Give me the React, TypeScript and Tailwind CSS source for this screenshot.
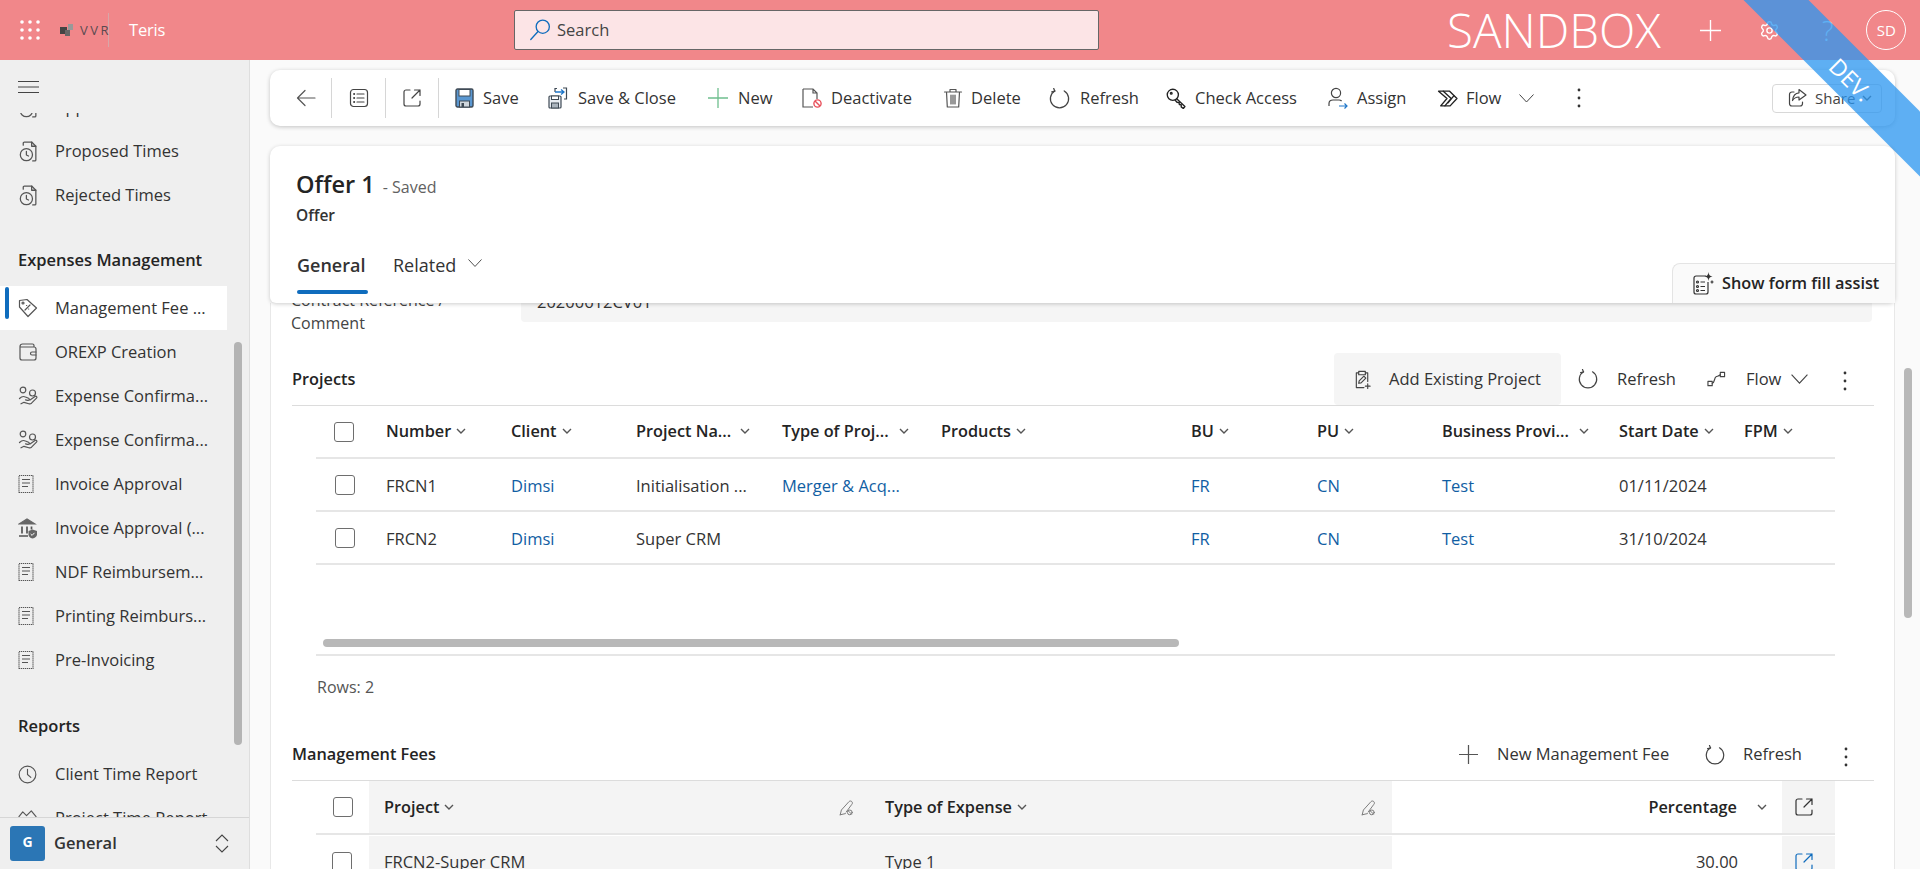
import React from "react";
import { Settings } from "lucide-react";

type P = { c?: string };
const Svg = ({ s = 20, c = "#424242", w = 1.2, children }: { s?: number; c?: string; w?: number; children: React.ReactNode }) => (
  <svg width={s} height={s} viewBox="0 0 20 20" fill="none" stroke={c} strokeWidth={w} strokeLinecap="round" strokeLinejoin="round" className="shrink-0">
    {children}
  </svg>
);

const Waffle = () => (
  <svg width="20" height="20" viewBox="0 0 20 20" fill="#fff" className="shrink-0">
    {[2, 10, 18].map((y) => [2, 10, 18].map((x) => <circle key={`${x}${y}`} cx={x} cy={y} r="1.8" />))}
  </svg>
);
const SearchI = () => (
  <Svg c="#0f6cbd" s={22}><circle cx="12.5" cy="7" r="6" /><path d="M8.2 11.4 1.6 18.6" /></Svg>
);
const Burger = () => (
  <svg width="21" height="12" viewBox="0 0 21 12" stroke="#444" strokeWidth="1" className="shrink-0"><path d="M0 .5h21M0 6h21M0 11.5h21" /></svg>
);
const Back = () => <Svg c="#555"><path d="M19 10H1.5M9 2.5 1.5 10 9 17.5" /></Svg>;
const ListI = () => (
  <Svg c="#444"><rect x="1.5" y="1.5" width="17" height="17" rx="3" /><path d="M8 6h7M8 10h7M8 14h7" /><path d="M5 6h.3M5 10h.3M5 14h.3" strokeWidth="1.8" /></Svg>
);
const OpenI = ({ c = "#444" }: P) => (
  <Svg c={c}><path d="M8 2H4a2 2 0 0 0-2 2v12a2 2 0 0 0 2 2h12a2 2 0 0 0 2-2v-3" /><path d="M10 10 18 2M12.5 2H18v5.5" /></Svg>
);
const SaveI = () => (
  <svg width="19" height="20" viewBox="0 0 19 20" className="shrink-0">
    <rect x="1" y="1" width="17" height="18" rx="1.5" fill="#5a97d1" stroke="#3f4a55" strokeWidth="1.4" />
    <rect x="4" y="1.5" width="11" height="6.5" fill="#fff" stroke="#3f4a55" />
    <rect x="4.5" y="13" width="10" height="6" fill="#cfd6dc" stroke="#3f4a55" />
    <rect x="6.5" y="15" width="2.5" height="4" fill="#3f4a55" />
  </svg>
);
const SaveCloseI = () => (
  <svg width="20" height="22" viewBox="0 0 20 22" fill="none" className="shrink-0">
    <rect x="1" y="9" width="12" height="12" rx="1" fill="#e8edf2" stroke="#3f4a55" strokeWidth="1.2" />
    <rect x="3.5" y="9" width="7" height="3.5" fill="#fff" stroke="#3f4a55" strokeWidth="1" />
    <rect x="3.5" y="16" width="7" height="5" fill="#aab4bd" stroke="#3f4a55" strokeWidth="1" />
    <path d="M7 5V1.5h2M15 1h3.5v11H16" stroke="#3f4a55" strokeWidth="1.2" />
    <path d="M7 5h9M13 2.5 16 5l-3 2.5" stroke="#1f77c9" strokeWidth="1.3" />
  </svg>
);
const Plus = ({ c = "#6fbf8e", s = 20 }: { c?: string; s?: number }) => (
  <Svg c={c} s={s} w={1.3}><path d="M10 0v20M0 10h20" strokeLinecap="butt" /></Svg>
);
const DeactivateI = () => (
  <svg width="20" height="20" viewBox="0 0 20 20" fill="none" className="shrink-0">
    <path d="M1 1h10l4 4v6M1 1v18h10M11 1v4h4" stroke="#555" strokeWidth="1.2" />
    <circle cx="15.5" cy="15.5" r="3.6" stroke="#e8505b" strokeWidth="1.4" />
    <path d="m13 13 5 5" stroke="#e8505b" strokeWidth="1.4" />
  </svg>
);
const Trash = () => (
  <Svg c="#555"><path d="M1.5 4h17M7 4V1.5h6V4M3.5 4l.8 15h11.4l.8-15M8 7v9M10 7v9M12 7v9" /></Svg>
);
const Refresh = ({ c = "#444", s = 20 }: { c?: string; s?: number }) => (
  <Svg c={c} s={s}><path d="M5.5 2.8a8.7 8.7 0 1 0 9 0" /><path d="M4.5 .4 5.6 3 2.6 3.6" /></Svg>
);
const KeyI = () => (
  <Svg c="#222" s={21} w={1.3}><circle cx="6.5" cy="6.5" r="5.3" /><circle cx="5" cy="5" r=".8" /><path d="m10.2 10.2 7.8 7.5-1.5 1.8-2-1.500v-2l-1.800-.300-.300-1.700-1.900-.400-1.700-1.900" /></Svg>
);
const AssignI = () => (
  <svg width="20" height="22" viewBox="0 0 20 22" fill="none" className="shrink-0">
    <circle cx="8" cy="6" r="4.6" stroke="#444" strokeWidth="1.2" />
    <path d="M1 19v-2.5C1 14 3 13 5 13h6c1.2 0 2 .4 2.600 1" stroke="#444" strokeWidth="1.2" />
    <path d="M11 19h8M16.500 16.500 19 19l-2.500 2.500" stroke="#1f77c9" strokeWidth="1.2" />
  </svg>
);
const FlowI = () => (
  <Svg c="#222" s={21} w={1.3}><path d="M1.500 3H12l7 7-6.500 7H3.500l6-7-8-7Z" /><path d="M6 3l7.500 7-6 7M16 7.500 10.500 14" /></Svg>
);
const Chev = ({ w = 15, c = "#444" }: { w?: number; c?: string }) => (
  <svg width={w} height={w * 0.6} viewBox="0 0 15 9" fill="none" stroke={c} strokeWidth="1" className="shrink-0"><path d="m.5.5 7 7.500 7-7.500" /></svg>
);
const SmallChev = () => (
  <svg width="10" height="7" viewBox="0 0 10 7" fill="none" stroke="#555" strokeWidth="1.4" className="shrink-0"><path d="m1 1 4 4 4-4" /></svg>
);
const Dots = () => (
  <svg width="4" height="20" viewBox="0 0 4 20" fill="#333" className="shrink-0"><circle cx="2" cy="2" r="1.400" /><circle cx="2" cy="10" r="1.400" /><circle cx="2" cy="18" r="1.400" /></svg>
);
const ShareI = () => (
  <Svg c="#444"><path d="M6 4H4a2.500 2.500 0 0 0-2.500 2.500v9A2.500 2.500 0 0 0 4 18h8a2.500 2.500 0 0 0 2.500-2.500V14" /><path d="M11 1.500 18 7l-7 5V9C8 9 6 10 4.500 12.500 5 8 7.500 5 11 4.800V1.500Z" /></Svg>
);
const DocClock = () => (
  <Svg c="#555" s={21}><path d="M5 4V2a1 1 0 0 1 1-1h7l4 4v13a1 1 0 0 1-1 1h-2" /><path d="M13 1v4h4" /><circle cx="8" cy="13" r="5.800" /><path d="M8 10v3.300l2 1" /></Svg>
);
const TagI = () => (
  <Svg c="#555" s={20}><path d="M9 1.500 18.500 10 10 18.500 1.500 9V2.500l7.500-1Z" /><circle cx="5" cy="5" r="1" /><path d="m7 12 5-5M8.500 7.500h.2M10.500 11h.2" /></Svg>
);
const WalletI = () => (
  <Svg c="#555" s={20}><path d="M2 4.500A2.500 2.500 0 0 1 4.500 2h10A1.500 1.500 0 0 1 16 3.500V5H2M2 4.500V16a2 2 0 0 0 2 2h12a2 2 0 0 0 2-2V7a2 2 0 0 0-2-2" /><path d="M18 10h-4a1.500 1.500 0 0 0 0 3h4" /></Svg>
);
const HandI = () => (
  <Svg c="#555" s={20}><circle cx="5" cy="4" r="2.800" /><circle cx="14.500" cy="7" r="3" /><path d="M1.500 12.500c2-2 4-2.500 6-1.500l3 1.300c1.500.7.700 2.400-1 2l-2-.5M12 14l5-3.500c1.200-.8 2.500.5 1.500 1.700l-5 5c-.8.700-1.700.8-2.700.5L6 16.300l-3 1.500" /></Svg>
);
const ReceiptI = () => (
  <svg width="16" height="20" viewBox="0 0 16 20" fill="none" stroke="#555" className="shrink-0">
    <path d="M1 1.500h14v17H1Z" strokeWidth="1.200" strokeDasharray="1.300 .7" />
    <path d="M4 5.500h8M4 9h8M4 12.500h6" strokeWidth="1.200" />
  </svg>
);
const BankI = () => (
  <svg width="20" height="21" viewBox="0 0 20 21" fill="none" className="shrink-0">
    <path d="M1 6 9 1l8 5H1Z" fill="#666" stroke="#666" strokeWidth="1.100" />
    <path d="M4 8.500v7M9 8.500v7M13.500 8.500v3M1 18h9" stroke="#555" strokeWidth="1.700" />
    <path d="M14.500 11.500 19 13v3.500c0 2-2 3.500-4.500 4-2.500-.5-4-2-4-4V13l4-1.500Z" fill="#666" />
    <path d="m12.700 16 1.400 1.400 2.400-2.600" stroke="#fff" strokeWidth="1" />
  </svg>
);
const ClockI = () => (
  <Svg c="#555" s={19}><circle cx="10" cy="10" r="8.800" /><path d="M10 4.500V10l3.500 3" /></Svg>
);
const ChartI = () => (
  <Svg c="#555" s={19}><path d="m1 8 4-5 4 4 5-5 5 6" /><path d="M1 18h18" /></Svg>
);
const NodesI = () => (
  <Svg c="#444" s={19}><rect x="1" y="12" width="4.500" height="4.500" /><rect x="14" y="2.500" width="4.500" height="4.500" /><path d="M5.500 14c3-1 2-6 4-7 1.500-.8 2.500 0 4.500-2" /></Svg>
);
const ClipI = () => (
  <Svg c="#444" s={19}><path d="M6 3H3.500v15.500h8M13 3h2.500v9" /><path d="M6 1.500h7V5H6Z" /><path d="m6 14 .5-2.500 5-5 2 2-5 5L6 14Z" /><path d="M15.500 14.500v5M13 17h5" /></Svg>
);
const Pencil = () => (
  <Svg c="#777" s={16}><path d="M1.500 18.500 3 12.500 12.500 2c1-1 2.500-1 3.500 0s1 2.500 0 3.500l-7 9.500" /><path d="M1.500 18.500 8 17" /><circle cx="13.500" cy="15.500" r="3" /><path d="m11.500 13.500 4 4" /></Svg>
);
const FormFill = () => (
  <svg width="21" height="23" viewBox="0 0 21 23" fill="none" stroke="#333" strokeWidth="1.200" className="shrink-0">
    <path d="M13 4H3a2 2 0 0 0-2 2v14a2 2 0 0 0 2 2h10a2 2 0 0 0 2-2V10" />
    <path d="M7.500 10H12M7.500 14.500H12M7.500 18.500H12" />
    <circle cx="4.500" cy="10" r="1" /><circle cx="4.500" cy="14.500" r="1" /><circle cx="4.500" cy="18.500" r="1" />
    <path d="M15.500 0c.4 3 1.200 4 4 4.500-2.800.5-3.600 1.500-4 4.500-.4-3-1.200-4-4-4.500 2.800-.5 3.600-1.500 4-4.500Z" fill="#333" stroke="none" />
    <path d="M19 8.500v3M17.500 10h3" />
  </svg>
);
const UpDown = () => (
  <svg width="14" height="19" viewBox="0 0 14 19" fill="none" stroke="#444" strokeWidth="1.100" className="shrink-0"><path d="m1 7 6-6 6 6M1 12l6 6 6-6" /></svg>
);

const font = "font-['Open_Sans','Noto_Sans',sans-serif]";

function NavItem({ icon, label, active }: { icon: React.ReactNode; label: string; active?: boolean }) {
  return (
    <div className={`relative flex h-[44px] w-[227px] shrink-0 items-center text-[16.500px] text-[#333] ${active ? "bg-white" : ""}`}>
      {active && <span className="absolute left-[5px] top-[1px] h-[32px] w-[4px] rounded-sm bg-[#0f6cbd]" />}
      <span className="ml-[18px] flex w-[37px] shrink-0 items-center">{icon}</span>
      <span className="whitespace-nowrap">{label}</span>
    </div>
  );
}

function NavHead({ label, h }: { label: string; h: string }) {
  return (
    <div className={`flex shrink-0 items-end pl-[18px] pb-[13px] text-[16.500px] font-semibold text-[#242424] ${h}`}>{label}</div>
  );
}

function Sidebar() {
  return (
    <aside className="flex w-[250px] shrink-0 flex-col border-r border-[#dedede] bg-[#efefef]">
      <div className="flex h-[53px] shrink-0 items-start pl-[18px] pt-[21px]"><Burger /></div>
      <div className="relative flex-1 overflow-hidden">
        <div className="-mt-[28px] flex flex-col">
          <NavItem icon={<DocClock />} label="Approved Times" />
          <NavItem icon={<DocClock />} label="Proposed Times" />
          <NavItem icon={<DocClock />} label="Rejected Times" />
          <NavHead label="Expenses Management" h="h-[69px]" />
          <NavItem active icon={<TagI />} label="Management Fee ..." />
          <NavItem icon={<WalletI />} label="OREXP Creation" />
          <NavItem icon={<HandI />} label="Expense Confirma..." />
          <NavItem icon={<HandI />} label="Expense Confirma..." />
          <NavItem icon={<ReceiptI />} label="Invoice Approval" />
          <NavItem icon={<BankI />} label="Invoice Approval (..." />
          <NavItem icon={<ReceiptI />} label="NDF Reimbursem..." />
          <NavItem icon={<ReceiptI />} label="Printing Reimburs..." />
          <NavItem icon={<ReceiptI />} label="Pre-Invoicing" />
          <NavHead label="Reports" h="h-[70px]" />
          <NavItem icon={<ClockI />} label="Client Time Report" />
          <NavItem icon={<ChartI />} label="Project Time Report" />
        </div>
        <div className="absolute left-[234px] top-[229px] h-[403px] w-[8px] rounded-full bg-[#b4b4b4]" />
      </div>
      <div className="flex h-[52px] shrink-0 items-center border-t border-[#d6d6d6] bg-[#efefef] pl-[10px]">
        <div className="flex h-[35px] w-[35px] items-center justify-center rounded-[3px] bg-[#2b76b5] pb-[5px] text-[14px] font-bold text-white">G</div>
        <span className="ml-[9px] w-[161px] text-[16.500px] font-semibold text-[#333]">General</span>
        <UpDown />
      </div>
    </aside>
  );
}

function Cmd({ icon, label, cls, gap }: { icon: React.ReactNode; label: string; cls: string; gap: string }) {
  return (
    <div className={`flex shrink-0 items-center text-[16.500px] text-[#333] ${cls}`}>
      <span className={`flex w-[20px] shrink-0 items-center ${gap}`}>{icon}</span>
      <span className="whitespace-nowrap">{label}</span>
    </div>
  );
}

const Sep = () => <span className="h-[40px] w-px shrink-0 bg-[#d6d6d6]" />;

function CommandBar() {
  return (
    <div className="flex h-[56px] shrink-0 items-center rounded-[10px] bg-white shadow-[0_1px_4px_rgba(0,0,0,0.22)]">
      <span className="flex w-[61px] shrink-0 justify-start pl-[26px]"><Back /></span><Sep />
      <span className="flex w-[53px] shrink-0 justify-center"><ListI /></span><Sep />
      <span className="flex w-[52px] shrink-0 justify-center"><OpenI /></span><Sep />
      <Cmd cls="ml-[16px] w-[93px]" gap="mr-[8px]" icon={<SaveI />} label="Save" />
      <Cmd cls="w-[160px]" gap="mr-[10px]" icon={<SaveCloseI />} label="Save & Close" />
      <Cmd cls="w-[94px]" gap="mr-[10px]" icon={<Plus />} label="New" />
      <Cmd cls="w-[141px]" gap="mr-[9px]" icon={<DeactivateI />} label="Deactivate" />
      <Cmd cls="w-[106px]" gap="mr-[8px]" icon={<Trash />} label="Delete" />
      <Cmd cls="w-[117px]" gap="mr-[11px]" icon={<Refresh s={21} />} label="Refresh" />
      <Cmd cls="w-[162px]" gap="mr-[9px]" icon={<KeyI />} label="Check Access" />
      <Cmd cls="w-[109px]" gap="mr-[9px]" icon={<AssignI />} label="Assign" />
      <Cmd cls="w-[82px]" gap="mr-[9px]" icon={<FlowI />} label="Flow" />
      <Chev />
      <span className="ml-[43px]"><Dots /></span>
      <div className="ml-auto mr-[13px] flex h-[29px] w-[110px] items-center rounded-[4px] border border-[#d8d8d8] pl-[15px] text-[15px] text-[#444]">
        <ShareI />
        <span className="ml-[7px] w-[47px]">Share</span>
        <SmallChev />
      </div>
    </div>
  );
}

function FormHeader() {
  return (
    <div className="relative z-10 h-[157px] shrink-0 rounded-t-[10px] rounded-b-[6px] bg-white pl-[26px] shadow-[0_1px_4px_rgba(0,0,0,0.2)]">
      <div className="flex h-[54px] items-end text-[23.500px] font-semibold leading-[32px] text-[#242424]">
        Offer 1<span className="mb-[1px] ml-[8px] text-[16px] font-normal leading-[24px] text-[#616161]">- Saved</span>
      </div>
      <div className="mt-[4px] text-[15.500px] font-semibold leading-[22px] text-[#333]">Offer</div>
      <div className="mt-[26px] flex items-start pl-[1px]">
        <div className="flex flex-col">
          <span className="text-[18px] font-semibold leading-[26px] text-[#333]">General</span>
          <span className="mt-[12px] h-[4px] w-[71px] rounded-full bg-[#0f6cbd]" />
        </div>
        <span className="ml-[25px] text-[18px] leading-[26px] text-[#333]">Related</span>
        <span className="ml-[12px] mt-[7px]"><Chev w={14} /></span>
      </div>
      <div className="absolute bottom-0 right-0 flex h-[40px] w-[223px] items-center rounded-tl-[8px] border-l border-t border-[#e4e4e4] bg-[#fafafa] pl-[20px] text-[16.300px] font-semibold text-[#242424]">
        <FormFill />
        <span className="ml-[8px] whitespace-nowrap">Show form fill assist</span>
      </div>
    </div>
  );
}

const Check = ({ cls = "" }: { cls?: string }) => (
  <span className={`block h-[20px] w-[20px] shrink-0 rounded-[3px] border border-[#6e6e6e] bg-white ${cls}`} />
);

function Head({ label, gap = "ml-[5px]" }: { label: string; gap?: string }) {
  return (
    <div className="flex items-center text-[16.300px] font-semibold text-[#242424]">
      <span className="whitespace-nowrap">{label}</span>
      <span className={gap}><SmallChev /></span>
    </div>
  );
}

const cols = "grid grid-cols-[70px_125px_125px_146px_159px_250px_126px_125px_177px_125px_91px] items-center";
const Link = ({ t }: { t: string }) => <span className="text-[#115ea3]">{t}</span>;

function Row({ a, b, c, d, s }: { a: string; b: string; c: string; d?: string; s: string }) {
  return (
    <div className={`${cols} h-[53px] border-b-2 border-[#e6e6e6] text-[16.500px] text-[#333]`}>
      <span className="pl-[19px]"><Check /></span>
      <span className="pt-[3px]">{a}</span>
      <span className="pt-[3px]"><Link t={b} /></span>
      <span className="pt-[3px]">{c}</span>
      <span className="pt-[3px]">{d ? <Link t={d} /> : null}</span>
      <span />
      <span className="pt-[3px]"><Link t="FR" /></span>
      <span className="pt-[3px]"><Link t="CN" /></span>
      <span className="pt-[3px]"><Link t="Test" /></span>
      <span className="pt-[3px]">{s}</span>
      <span />
    </div>
  );
}

function Projects() {
  return (
    <section>
      <div className="flex h-[53px] items-center border-b border-[#dcdcdc]">
        <h2 className="text-[16.300px] font-semibold text-[#242424]">Projects</h2>
        <div className="ml-auto flex h-full items-center text-[16.500px] text-[#333]">
          <div className="flex h-full w-[227px] items-center rounded-[4px] bg-[#f5f5f5] pl-[19px]">
            <ClipI /><span className="ml-[17px] whitespace-nowrap">Add Existing Project</span>
          </div>
          <div className="flex w-[129px] items-center pl-[17px]">
            <Refresh /><span className="ml-[19px]">Refresh</span>
          </div>
          <div className="flex w-[140px] items-center pl-[17px]">
            <NodesI /><span className="ml-[20px] w-[45px]">Flow</span><Chev w={17} />
          </div>
          <div className="flex w-[44px] items-center pl-[13px] pt-[4px]"><Dots /></div>
        </div>
      </div>
      <div className="ml-[24px] w-[1519px]">
        <div className={`${cols} h-[53px] border-b-2 border-[#e6e6e6]`}>
          <span className="pl-[18px]"><Check /></span>
          <Head label="Number" />
          <Head label="Client" />
          <Head label="Project Na..." gap="ml-[9px]" />
          <Head label="Type of Proj..." gap="ml-[10px]" />
          <Head label="Products" />
          <Head label="BU" />
          <Head label="PU" />
          <Head label="Business Provi..." gap="ml-[10px]" />
          <Head label="Start Date" />
          <Head label="FPM" />
        </div>
        <Row a="FRCN1" b="Dimsi" c="Initialisation ..." d="Merger & Acq..." s="01/11/2024" />
        <Row a="FRCN2" b="Dimsi" c="Super CRM" s="31/10/2024" />
        <div className="flex h-[91px] items-end border-b-2 border-[#e6e6e6] pb-[7px] pl-[7px]">
          <span className="block h-[8px] w-[856px] rounded-full bg-[#b8b8b8]" />
        </div>
        <div className="flex h-[62px] items-center pl-[1px] text-[16px] text-[#555]">Rows: 2</div>
      </div>
    </section>
  );
}

function Fees() {
  return (
    <section className="mt-[11px]">
      <div className="flex h-[52px] items-center border-b border-[#dcdcdc]">
        <h2 className="text-[16.300px] font-semibold text-[#242424]">Management Fees</h2>
        <div className="ml-auto flex items-center text-[16.500px] text-[#333]">
          <Plus c="#555" s={19} />
          <span className="ml-[19px] w-[208px] whitespace-nowrap">New Management Fee</span>
          <Refresh />
          <span className="ml-[18px] w-[101px]">Refresh</span>
          <span className="w-[30px] pt-[4px]"><Dots /></span>
        </div>
      </div>
      <div className="ml-[24px] w-[1519px]">
        <div className="grid h-[54px] grid-cols-[53px_501px_522px_390px_53px] items-center border-b-2 border-[#e6e6e6]">
          <span className="pl-[17px]"><Check /></span>
          <div className="flex h-full items-center bg-[#f4f4f4] pl-[15px] pr-[15px] pt-[1px]"><Head label="Project" /><span className="ml-auto"><Pencil /></span></div>
          <div className="flex h-full items-center bg-[#f4f4f4] pl-[15px] pr-[15px] pt-[1px]"><Head label="Type of Expense" /><span className="ml-auto"><Pencil /></span></div>
          <div className="flex h-full items-center justify-end pr-[15px] pt-[1px]">
            <span className="mr-[20px] text-[16.300px] font-semibold text-[#242424]">Percentage</span><SmallChev />
          </div>
          <div className="flex h-full items-center justify-center bg-[#f4f4f4]"><span className="ml-[-10px]"><OpenI c="#333" /></span></div>
        </div>
        <div className="mt-[1px] grid h-[52px] grid-cols-[53px_501px_522px_390px_53px] items-center text-[16.500px] text-[#333]">
          <span className="pl-[16px]"><Check /></span>
          <div className="flex h-full items-center bg-[#f4f4f4] pl-[15px]">FRCN2-Super CRM</div>
          <div className="flex h-full items-center bg-[#f4f4f4] pl-[15px]">Type 1</div>
          <div className="flex h-full items-center justify-end pr-[44px]">30.00</div>
          <div className="flex h-full items-center justify-center bg-[#f4f4f4]"><span className="ml-[-10px]"><OpenI c="#0f6cbd" /></span></div>
        </div>
      </div>
    </section>
  );
}

function FormBody() {
  return (
    <div className="min-h-0 flex-1 overflow-hidden border-x border-[#e8e8e8] bg-white pl-[21px] pr-[20px]">
      <div className="-mt-[20px] flex items-start">
        <div className="w-[229px] pt-[6px] text-[16px] leading-[23px] text-[#444]">
          <div className="-ml-[1px]">Contract Reference /</div>
          <div className="-ml-[1px]">Comment</div>
        </div>
        <div className="flex h-[39px] w-[1351px] items-center rounded-[4px] bg-[#f5f5f5] pl-[16px] text-[16.500px] text-[#333]">20200612CV01</div>
      </div>
      <div className="mt-[18px]">
        <Projects />
        <Fees />
      </div>
    </div>
  );
}

function TopBar() {
  return (
    <header className="flex h-[60px] shrink-0 items-center bg-[#f1878a] text-white">
      <span className="ml-[20px]"><Waffle /></span>
      <div className="ml-[20px] flex w-[49px] items-center border-r border-[#d8a6a8] py-[10px]">
        <svg width="14" height="14" viewBox="0 0 14 14" className="shrink-0">
          <rect x="0" y="4" width="7" height="7" fill="#444" /><rect x="5" y="7" width="5" height="6" fill="#666" /><rect x="8" y="1" width="5" height="6" fill="#999" />
        </svg>
        <span className="ml-[6px] text-[13px] font-normal leading-none tracking-[2.500px] text-[#5a4a50]">VVR</span>
      </div>
      <span className="ml-[20px] w-[385px] text-[16.500px] tracking-[-0.2px]">Teris</span>
      <div className="flex h-[40px] w-[585px] items-center rounded-[2px] border border-[#666] bg-[#fce4e6] pl-[14px] text-[16.500px] text-[#444]">
        <SearchI /><span className="ml-[6px] pt-[1px]">Search</span>
      </div>
      <span className="ml-[348px] w-[253px] whitespace-nowrap text-[47.500px] font-light leading-none">SANDBOX</span>
      <Plus c="#fff" s={21} />
      <span className="ml-[38px]"><Settings size={21} strokeWidth={1.6} /></span>
      <span className="ml-[42px] text-[27px] font-light leading-none">?</span>
      <span className="ml-[33px] flex h-[40px] w-[40px] items-center justify-center rounded-full border border-white text-[15px]">SD</span>
    </header>
  );
}

export default function App() {
  return (
    <div className={`relative flex h-[869px] w-[1920px] flex-col overflow-hidden ${font}`}>
      <TopBar />
      <div className="flex min-h-0 flex-1">
        <Sidebar />
        <main className="flex min-w-0 flex-1 bg-[#fafafa] pl-[20px]">
          <div className="flex w-[1625px] shrink-0 flex-col pt-[10px]">
            <CommandBar />
            <div className="h-[20px] shrink-0" />
            <FormHeader />
            <FormBody />
          </div>
          <div className="ml-[9px] mt-[308px] h-[250px] w-[8px] rounded-full bg-[#b8b8b8]" />
        </main>
      </div>
      <div className="absolute left-[1646px] top-[47px] flex h-[46px] w-[400px] rotate-45 items-center justify-center bg-[rgba(42,150,240,0.75)] text-[23px] text-white">
        <span className="ml-[20px] mt-[6px]">DEV.</span>
      </div>
    </div>
  );
}
